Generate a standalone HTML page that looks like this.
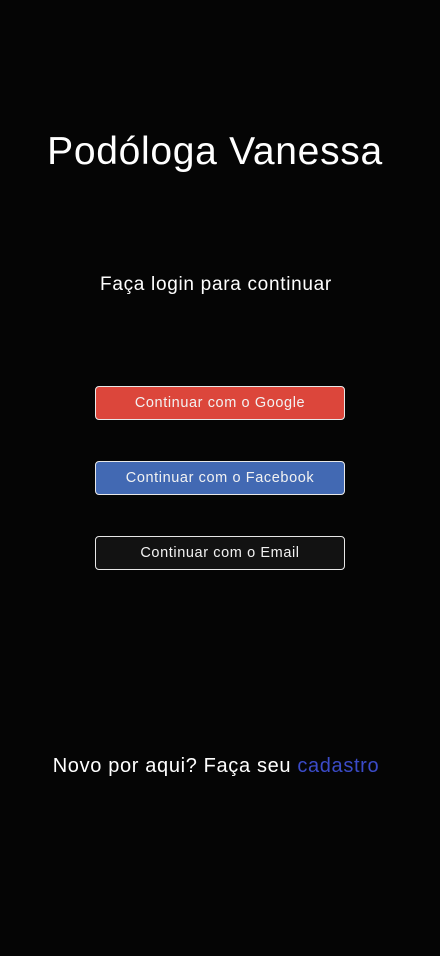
<!DOCTYPE html>
<html><head><meta charset="utf-8"><style>
html,body{margin:0;padding:0;background:#050505;width:440px;height:956px;overflow:hidden;font-family:"Liberation Sans",sans-serif;color:#fff}
.t{position:absolute;left:0;width:440px;text-align:center}
.b{position:absolute;left:95px;width:248px;height:32px;border:1px solid #e8e8e8;border-radius:4px;font-size:14.5px;letter-spacing:0.6px;line-height:32px;text-align:center;color:#f2f2f2}
</style></head><body>
<div class="t" style="top:130px;font-size:39px;letter-spacing:0.7px;left:-5px">Podóloga Vanessa</div>
<div class="t" style="top:274px;font-size:19px;letter-spacing:0.7px;left:-4px">Faça login para continuar</div>
<div class="b" style="top:386px;background:#dc463b">Continuar com o Google</div>
<div class="b" style="top:461px;background:#4269b3">Continuar com o Facebook</div>
<div class="b" style="top:536px;background:#121212">Continuar com o Email</div>
<div class="t" style="top:755px;font-size:20px;letter-spacing:0.65px;left:-4px">Novo por aqui? Faça seu <span style="color:#3b4bc8">cadastro</span></div>
</body></html>
